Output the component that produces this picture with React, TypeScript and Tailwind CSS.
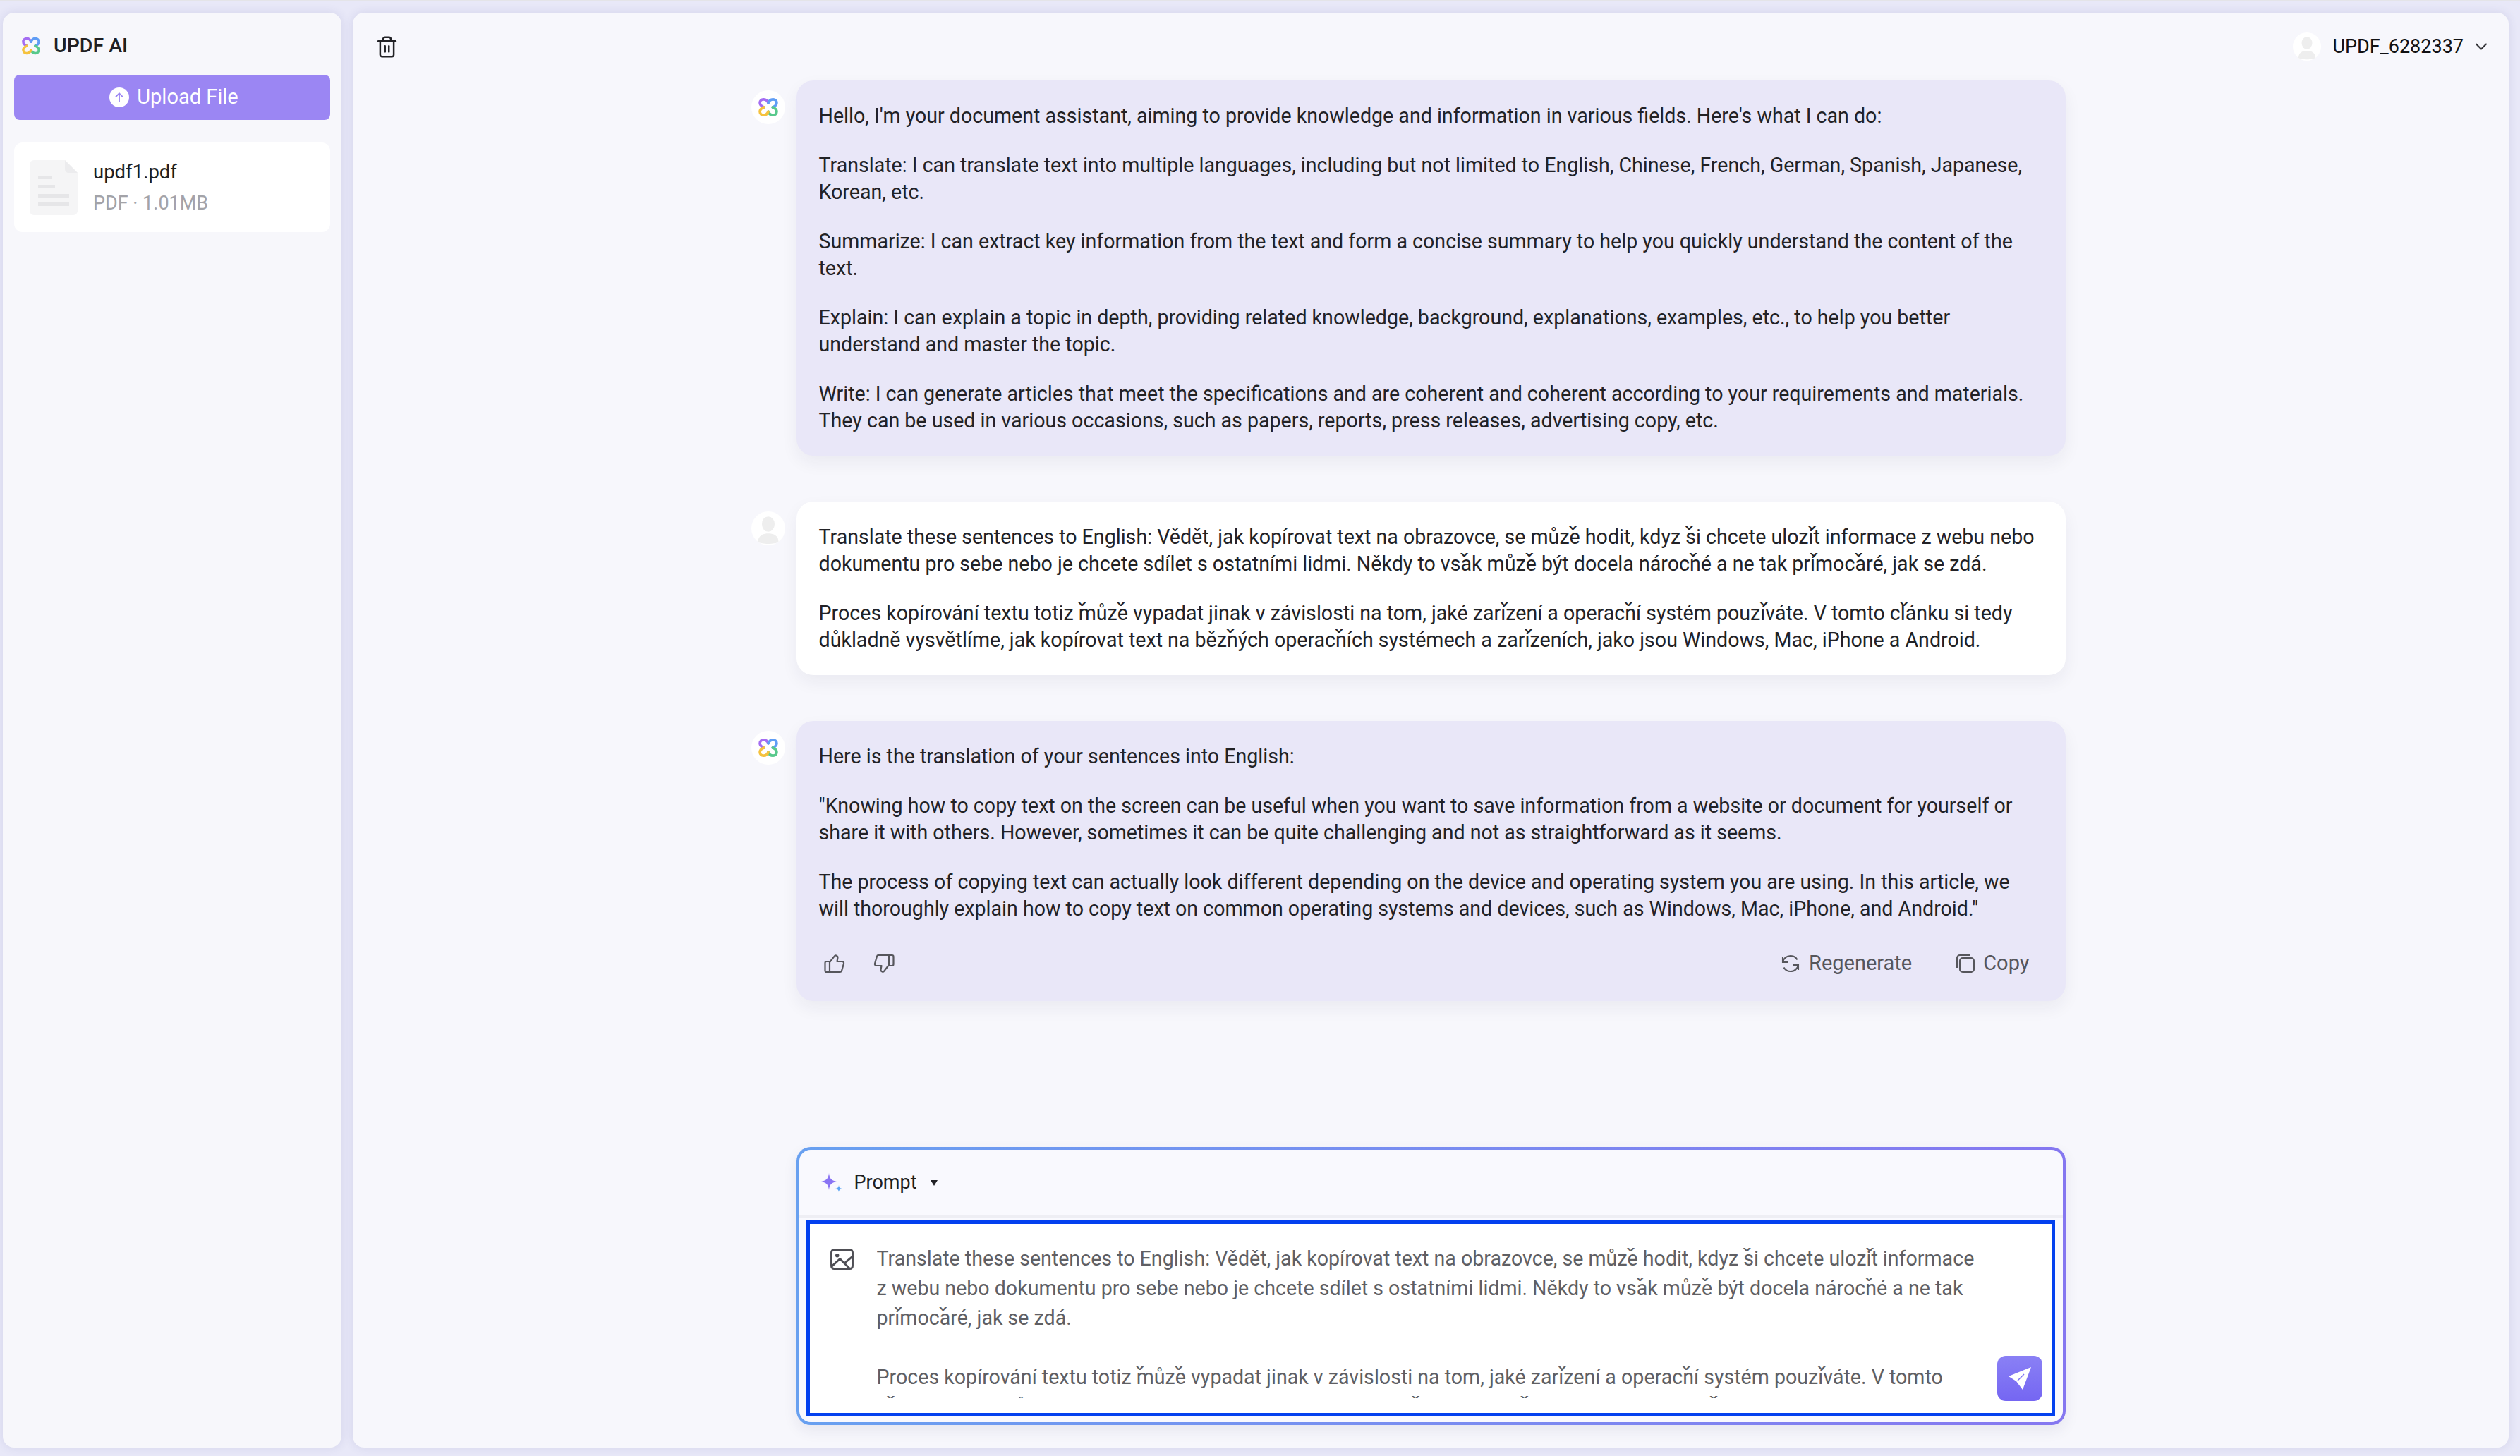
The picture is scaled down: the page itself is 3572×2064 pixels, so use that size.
import { ChevronDown, Trash2 } from 'lucide-react';

const LINE = 'whitespace-nowrap';

const greeting = [
  ["Hello, I'm your document assistant, aiming to provide knowledge and information in various fields. Here's what I can do:"],
  [
    'Translate: I can translate text into multiple languages, including but not limited to English, Chinese, French, German, Spanish, Japanese,',
    'Korean, etc.',
  ],
  [
    'Summarize: I can extract key information from the text and form a concise summary to help you quickly understand the content of the',
    'text.',
  ],
  [
    'Explain: I can explain a topic in depth, providing related knowledge, background, explanations, examples, etc., to help you better',
    'understand and master the topic.',
  ],
  [
    'Write: I can generate articles that meet the specifications and are coherent and coherent according to your requirements and materials.',
    'They can be used in various occasions, such as papers, reports, press releases, advertising copy, etc.',
  ],
];

const question = [
  [
    'Translate these sentences to English: Vědět, jak kopírovat text na obrazovce, se můzˇe hodit, kdyz ˇsi chcete ulozˇit informace z webu nebo',
    'dokumentu pro sebe nebo je chcete sdílet s ostatními lidmi. Někdy to vsˇak můzˇe být docela nárocˇné a ne tak prˇímocˇaré, jak se zdá.',
  ],
  [
    'Proces kopírování textu totiz ˇmůzˇe vypadat jinak v závislosti na tom, jaké zarˇízení a operacˇní systém pouzˇíváte. V tomto cˇlánku si tedy',
    'důkladně vysvětlíme, jak kopírovat text na bězˇných operacˇních systémech a zarˇízeních, jako jsou Windows, Mac, iPhone a Android.',
  ],
];

const answer = [
  ['Here is the translation of your sentences into English:'],
  [
    '"Knowing how to copy text on the screen can be useful when you want to save information from a website or document for yourself or',
    'share it with others. However, sometimes it can be quite challenging and not as straightforward as it seems.',
  ],
  [
    'The process of copying text can actually look different depending on the device and operating system you are using. In this article, we',
    'will thoroughly explain how to copy text on common operating systems and devices, such as Windows, Mac, iPhone, and Android."',
  ],
];

const promptLines = [
  'Translate these sentences to English: Vědět, jak kopírovat text na obrazovce, se můzˇe hodit, kdyz ˇsi chcete ulozˇit informace',
  'z webu nebo dokumentu pro sebe nebo je chcete sdílet s ostatními lidmi. Někdy to vsˇak můzˇe být docela nárocˇné a ne tak',
  'prˇímocˇaré, jak se zdá.',
  '\u00a0',
  'Proces kopírování textu totiz ˇmůzˇe vypadat jinak v závislosti na tom, jaké zarˇízení a operacˇní systém pouzˇíváte. V tomto',
  'cˇlánku si tedy důkladně vysvětlíme, jak kopírovat text na bězˇných operacˇních systémech a zarˇízeních, jako jsou',
];

// The source renders detached carons that overlap the following letter
function CzechLine({ text }: { text: string }) {
  const parts = text.split('ˇ');
  return (
    <div className={LINE}>
      {parts.map((part, i) => (
        <span key={i}>
          {i > 0 && (
            <span className="inline-block w-0 -translate-x-[3px] translate-y-[3px] text-[36px] leading-[0]">ˇ</span>
          )}
          {part}
        </span>
      ))}
    </div>
  );
}

function Paragraphs({ items }: { items: string[][] }) {
  return (
    <div className="flex flex-col gap-[32px] text-[28.6px] leading-[38px] text-[#222226]">
      {items.map((lines, i) => (
        <div key={i}>
          {lines.map((line, j) => (
            <CzechLine key={j} text={line} />
          ))}
        </div>
      ))}
    </div>
  );
}

function Logo({ className }: { className: string }) {
  return (
    <svg viewBox="0 0 24 24" fill="none" strokeWidth="3" strokeLinecap="round" className={className}>
      <path d="M12 7C10 1.5 2.5 2 2.5 7C2.5 9 4.5 11 7 12" stroke="#a46df2" />
      <path d="M12 7C14 1.5 21.5 2 21.5 7C21.5 9 19.5 11 17 12" stroke="#5f9df5" />
      <path d="M17 12C19.5 13 21.5 15 21.5 17C21.5 22 14 22.5 12 17" stroke="#58c98c" />
      <path d="M7 12C4.5 13 2.5 15 2.5 17C2.5 22 10 22.5 12 17" stroke="#f5c23e" />
    </svg>
  );
}

function BotAvatar() {
  return (
    <div className="flex h-[48px] w-[48px] items-center justify-center rounded-full bg-white">
      <Logo className="h-[30px] w-[30px]" />
    </div>
  );
}

function Avatar({ className }: { className: string }) {
  return (
    <div className={`flex items-center justify-center rounded-full bg-white ${className}`}>
      <svg viewBox="0 0 40 40" className="h-full w-full" fill="#eeeeee">
        <ellipse cx="20" cy="15" rx="7.5" ry="9" />
        <path d="M8 36C8 29 13 26 20 26C27 26 32 29 32 36C28 39 12 39 8 36Z" />
      </svg>
    </div>
  );
}

function ThumbUp({ flip }: { flip?: boolean }) {
  return (
    <svg
      viewBox="0 0 32 32"
      fill="none"
      stroke="#56565c"
      strokeWidth="2.2"
      strokeLinejoin="round"
      className={`h-[32px] w-[32px] ${flip ? 'rotate-180' : ''}`}
    >
      <path d="M8.5 13H4.5C3.4 13 2.5 13.9 2.5 15V26C2.5 27.1 3.4 28 4.5 28H24C25 28 25.8 27.4 26 26.4L29 16C29.4 14.5 28.3 13 26.7 13H19.5L20.5 7.5C20.9 5.3 17.4 3 15.8 5.4L9.5 13.5" />
      <path d="M9 13V28" />
    </svg>
  );
}

function Message({ avatar, tone, children }: { avatar: React.ReactNode; tone: string; children: React.ReactNode }) {
  return (
    <div className="-ml-[64px] flex gap-[16px]">
      <div className="w-[48px] shrink-0 pt-[14px]">{avatar}</div>
      <div className={`w-[1799px] rounded-[24px] px-[32px] py-[31px] shadow-[0_10px_24px_rgba(30,30,70,0.06)] ${tone}`}>
        {children}
      </div>
    </div>
  );
}

export default function App() {
  return (
    <div className="flex h-[2064px] w-[3572px] gap-[16px] overflow-hidden border-t-2 border-[#e4e4e8] bg-[#e8e8f8] pb-[12px] pl-[4px] pr-[16px] pt-[16px] font-[Roboto,sans-serif]">
      {/* Sidebar */}
      <aside className="flex w-[480px] shrink-0 flex-col rounded-[16px] bg-[#f7f7fb] px-[16px] shadow-[0_0_14px_rgba(60,60,130,0.12)]">
        <div className="flex h-[88px] items-center gap-[18px] pl-[10px] pt-[6px]">
          <Logo className="h-[28px] w-[28px]" />
          <span className="text-[28.5px] font-medium text-[#1f1f23]">UPDF AI</span>
        </div>
        <button className="flex h-[64px] items-center justify-center gap-[11px] rounded-[8px] bg-[#9b86f3] pl-[5px] text-[29px] text-white">
          <span className="flex h-[28px] w-[28px] items-center justify-center rounded-full bg-white">
            <svg viewBox="0 0 16 16" fill="none" stroke="#9b86f3" strokeWidth="1.6" className="h-[18px] w-[18px]">
              <path d="M8 14V3M3.5 7.5L8 3L12.5 7.5" />
            </svg>
          </span>
          Upload File
        </button>
        <div className="mt-[32px] flex h-[127px] items-center gap-[22px] rounded-[12px] bg-white pl-[22px]">
          <svg viewBox="0 0 68 78" className="h-[78px] w-[68px]">
            <path d="M6 0H50L68 18V72C68 75 65 78 62 78H6C3 78 0 75 0 72V6C0 3 3 0 6 0Z" fill="#f5f5f6" />
            <path d="M50 0L68 18H56C52 18 50 16 50 12Z" fill="#ececee" />
            <path d="M12 22H32V27H12ZM12 35H36V40H12ZM12 48H56V53H12ZM12 60H56V65H12Z" fill="#e6e6e8" />
          </svg>
          <div className="flex flex-col gap-[6px]">
            <span className="text-[27.5px] leading-[38px] text-[#1f1f23]">updf1.pdf</span>
            <span className="text-[27px] leading-[38px] text-[#a3a3a8]">PDF · 1.01MB</span>
          </div>
        </div>
      </aside>

      {/* Main panel */}
      <main className="flex flex-1 flex-col rounded-[16px] bg-[#f7f7fc] pb-[32px] shadow-[0_0_14px_rgba(60,60,130,0.12)]">
        <header className="flex h-[96px] shrink-0 items-center justify-between pl-[32px] pr-[25px]">
          <Trash2 className="h-[33px] w-[33px] text-[#222226]" strokeWidth={1.8} />
          <div className="flex items-center gap-[16px]">
            <Avatar className="h-[40px] w-[40px]" />
            <span className="text-[27px] text-[#111114]">UPDF_6282337</span>
            <ChevronDown className="-ml-[5px] h-[28px] w-[28px] text-[#333338]" strokeWidth={1.8} />
          </div>
        </header>

        <div className="mx-auto flex w-[1799px] flex-1 flex-col gap-[65px]">
          <Message avatar={<BotAvatar />} tone="bg-[#e9e7f8]">
            <Paragraphs items={greeting} />
          </Message>
          <Message avatar={<Avatar className="h-[48px] w-[48px]" />} tone="bg-white">
            <Paragraphs items={question} />
          </Message>
          <Message avatar={<BotAvatar />} tone="bg-[#e9e7f8]">
            <Paragraphs items={answer} />
            <div className="mt-[37px] flex items-center justify-between pl-[6px] pr-[19px] text-[29px] text-[#56565c]">
              <div className="flex items-center gap-[38px]">
                <ThumbUp />
                <ThumbUp flip />
              </div>
              <div className="flex items-center gap-[62px]">
                <div className="flex items-center gap-[12px]">
                  <svg viewBox="0 0 28 28" fill="none" stroke="#56565c" strokeWidth="2.1" className="h-[28px] w-[28px]">
                    <path d="M3 12C4 6.5 8.5 3 14 3C18 3 21.5 5 23.5 8.5" />
                    <path d="M3 5V12H10" />
                    <path d="M25 16C24 21.5 19.5 25 14 25C10 25 6.5 23 4.5 19.5" />
                    <path d="M25 23V16H18" />
                  </svg>
                  Regenerate
                </div>
                <div className="flex items-center gap-[11px]">
                  <svg viewBox="0 0 28 28" fill="none" stroke="#56565c" strokeWidth="2.1" className="h-[28px] w-[28px]">
                    <rect x="6" y="6" width="20" height="20" rx="4" />
                    <path d="M2 20V6C2 3.8 3.8 2 6 2H20" />
                  </svg>
                  Copy
                </div>
              </div>
            </div>
          </Message>

          {/* Prompt box */}
          <div className="mt-auto rounded-[20px] bg-linear-to-r from-[#68a0f0] to-[#8577f0] p-[4px] shadow-[0_8px_20px_rgba(40,40,90,0.08)]">
            <div className="flex h-[386px] flex-col rounded-[16px] bg-[#f9f9fe]">
              <div className="flex h-[96px] shrink-0 items-center gap-[17px] border-b-[3px] border-[#eeeef4] pl-[31px]">
                <svg viewBox="0 0 30 27" className="h-[27px] w-[30px]">
                  <path d="M11 0C12 8 14 10 22 12C14 14 12 16 11 24C10 16 8 14 0 12C8 10 10 8 11 0Z" fill="#8a74f4" />
                  <path d="M25 17C25.4 20 26.5 21.5 30 22C26.5 22.5 25.4 24 25 27C24.6 24 23.5 22.5 20 22C23.5 21.5 24.6 20 25 17Z" fill="#5ca6f5" />
                </svg>
                <span className="text-[27px] text-[#1f1f23]">Prompt</span>
                <span className="ml-[2px] h-0 w-0 border-x-[5px] border-t-[8px] border-x-transparent border-t-[#222226]" />
              </div>
              <div className="relative ml-[10px] mr-[11px] mt-[4px] h-[278px] border-[5px] border-[#0340ef] bg-white pl-[95px] pt-[28px]">
                <svg viewBox="0 0 34 31" fill="none" stroke="#4e4e54" strokeWidth="3" className="absolute left-[29px] top-[35px] h-[30px] w-[33px]">
                  <rect x="1.5" y="1.5" width="31" height="28" rx="4" />
                  <circle cx="10" cy="10" r="2.8" fill="#4e4e54" stroke="none" />
                  <path d="M2 26L14 15L28 29M21 21L33 11" />
                </svg>
                <div className="h-[219px] overflow-hidden text-[28.6px] leading-[42px] text-[#5f5f64]">
                  {promptLines.map((line, i) => (
                    <CzechLine key={i} text={line} />
                  ))}
                </div>
                <button className="absolute bottom-[17px] right-[13px] flex h-[64px] w-[64px] items-center justify-center rounded-[12px] bg-linear-to-b from-[#8a80f5] to-[#7566f2]">
                  <svg viewBox="0 0 36 36" className="h-[36px] w-[36px]" fill="white">
                    <path d="M34 2L2 15L13 22L22 34Z" />
                    <path d="M24 12L15 21" stroke="#7f72f3" strokeWidth="1.4" />
                  </svg>
                </button>
              </div>
            </div>
          </div>
        </div>
      </main>
    </div>
  );
}
